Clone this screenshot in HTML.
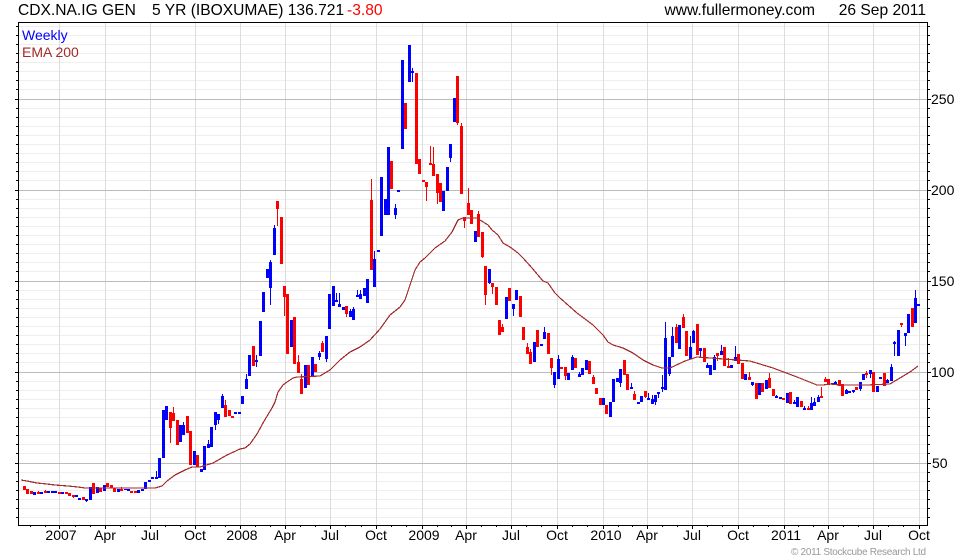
<!DOCTYPE html>
<html>
<head>
<meta charset="utf-8">
<title>CDX.NA.IG GEN 5 YR chart</title>
<style>
html,body{margin:0;padding:0;background:#fff;width:980px;height:560px;overflow:hidden}
svg{display:block}
text{font-family:"Liberation Sans",Arial,sans-serif}
</style>
</head>
<body>
<svg width="980" height="560" viewBox="0 0 980 560" xmlns="http://www.w3.org/2000/svg">
<rect width="980" height="560" fill="#fff"/>
<!-- minor horizontal grid -->
<path stroke="#eeeeee" stroke-width="1" fill="none" d="M19 26.5H927M19 35.5H927M19 44.5H927M19 53.5H927M19 62.5H927M19 71.5H927M19 80.5H927M19 89.5H927M19 108.5H927M19 117.5H927M19 126.5H927M19 135.5H927M19 144.5H927M19 153.5H927M19 162.5H927M19 171.5H927M19 180.5H927M19 199.5H927M19 208.5H927M19 217.5H927M19 226.5H927M19 235.5H927M19 244.5H927M19 253.5H927M19 262.5H927M19 271.5H927M19 290.5H927M19 299.5H927M19 308.5H927M19 317.5H927M19 326.5H927M19 335.5H927M19 344.5H927M19 353.5H927M19 362.5H927M19 381.5H927M19 390.5H927M19 399.5H927M19 408.5H927M19 417.5H927M19 426.5H927M19 435.5H927M19 444.5H927M19 453.5H927M19 472.5H927M19 481.5H927M19 490.5H927M19 499.5H927M19 508.5H927M19 517.5H927"/>
<!-- vertical grid -->
<path stroke="#dcdcdc" stroke-width="1" fill="none" d="M59.5 23V525M105.5 23V525M150.5 23V525M195.5 23V525M240.5 23V525M285.5 23V525M330.5 23V525M376.5 23V525M422.5 23V525M466.5 23V525M511.5 23V525M557.5 23V525M603.5 23V525M647.5 23V525M692.5 23V525M738.5 23V525M784.5 23V525M828.5 23V525M873.5 23V525M919.5 23V525"/>
<!-- major horizontal grid -->
<path stroke="#bcbcbc" stroke-width="1" fill="none" d="M19 99.5H927M19 190.5H927M19 281.5H927M19 372.5H927M19 463.5H927"/>
<!-- candle bodies: blue -->
<path stroke="#0000ff" stroke-width="3" fill="none" d="M34.5 492V495M41.5 492V494M48.5 491V493M52.5 491V493M55.5 491V493M62.5 492V494M76.5 495V497M79.5 498V500M86.5 499V501M90.5 487V500M97.5 487V493M104.5 485V491M118.5 489V492M125.5 489V490M128.5 489V491M138.5 490V493M142.5 489V491M145.5 482V489M149.5 480V482M152.5 477V479M156.5 477V479M159.5 458V478M163.5 410V458M166.5 406V420M180.5 425V442M183.5 425V435M194.5 451V465M201.5 469V472M204.5 446V470M208.5 444V448M211.5 427V447M215.5 412V425M218.5 414V420M222.5 396V408M235.5 412V414M239.5 412V414M242.5 396V404M246.5 379V389M249.5 355V376M256.5 360V362M260.5 321V356M263.5 292V312M267.5 269V278M270.5 262V288M274.5 228V255M291.5 320V347M305.5 365V388M312.5 357V377M319.5 353V357M326.5 336V359M329.5 294V329M333.5 286V306M336.5 300V302M339.5 304V307M343.5 307V310M350.5 311V317M353.5 309V320M357.5 295V297M360.5 294V299M364.5 288V296M367.5 279V303M374.5 259V287M378.5 250V252M381.5 177V236M385.5 199V215M388.5 147V215M395.5 208V215M398.5 190V192M402.5 60V149M409.5 45V82M412.5 71V73M443.5 191V211M447.5 167V191M450.5 144V158M454.5 98V122M475.5 231V242M489.5 269V283M506.5 297V319M513.5 304V309M516.5 290V300M534.5 342V362M541.5 344V346M544.5 332V339M554.5 372V385M558.5 359V379M568.5 373V380M572.5 357V370M579.5 374V377M582.5 368V375M586.5 360V370M603.5 398V405M610.5 402V417M613.5 379V402M617.5 378V382M620.5 369V383M631.5 387V389M638.5 402V404M641.5 396V402M648.5 398V400M652.5 399V404M655.5 395V402M658.5 392V394M662.5 387V389M665.5 338V390M669.5 357V374M672.5 336V357M679.5 325V349M690.5 347V359M693.5 331V343M700.5 348V351M707.5 365V368M710.5 365V375M714.5 357V370M721.5 351V355M731.5 365V368M735.5 357V361M745.5 374V380M752.5 382V385M759.5 383V395M766.5 380V389M776.5 396V398M780.5 397V399M787.5 393V403M794.5 402V404M797.5 397V407M804.5 408V410M811.5 403V410M814.5 402V406M818.5 397V402M832.5 383V384M835.5 382V384M846.5 390V394M849.5 391V393M853.5 390V392M860.5 382V389M863.5 374V380M870.5 370V374M877.5 386V392M880.5 377V379M887.5 380V383M891.5 367V381M894.5 342V344M898.5 330V356M905.5 333V336M908.5 314V333M915.5 298V323M918.5 304V306"/>
<!-- candle wicks: blue -->
<path stroke="#0000ff" stroke-width="1" fill="none" d="M86.5 501V502M156.5 471V477M183.5 422V425M208.5 440V444M215.5 425V430M218.5 420V424M222.5 394V396M246.5 374V379M256.5 355V367M270.5 260V305M274.5 225V228M319.5 351V360M326.5 359V362M336.5 293V300M339.5 293V304M350.5 309V311M353.5 307V309M357.5 290V295M360.5 290V294M374.5 251V259M395.5 204V219M412.5 68V82M450.5 158V162M489.5 283V284M513.5 309V316M544.5 327V332M554.5 385V388M558.5 355V359M572.5 355V357M579.5 372V374M620.5 383V387M631.5 383V387M648.5 393V398M652.5 395V399M655.5 402V405M658.5 394V398M662.5 375V392M665.5 322V338M669.5 374V376M672.5 327V336M690.5 336V347M693.5 330V331M700.5 351V357M707.5 363V365M714.5 355V357M721.5 345V351M735.5 346V357M752.5 385V386M776.5 395V396M794.5 400V402M804.5 406V408M811.5 397V403M814.5 398V402M818.5 395V397M835.5 381V382M846.5 389V390M853.5 392V393M860.5 389V391M870.5 374V378M887.5 379V380M891.5 364V367M894.5 341V356M905.5 336V346M915.5 290V298"/>
<!-- candle bodies: red -->
<path stroke="#ff0000" stroke-width="3" fill="none" d="M24.5 486V490M27.5 489V494M31.5 491V494M38.5 492V494M45.5 491V493M59.5 492V494M66.5 492V494M69.5 493V496M73.5 495V497M83.5 497V500M93.5 483V494M100.5 488V492M107.5 483V487M111.5 485V488M114.5 488V492M121.5 489V491M131.5 491V493M135.5 491V493M170.5 412V428M173.5 413V421M177.5 420V445M187.5 416V433M190.5 431V465M197.5 455V467M225.5 405V417M229.5 410V416M232.5 416V418M253.5 346V366M277.5 201V209M281.5 217V264M284.5 286V297M287.5 294V354M294.5 317V364M298.5 362V373M301.5 379V394M308.5 365V385M315.5 364V372M322.5 343V352M346.5 306V314M371.5 200V270M391.5 161V189M405.5 103V129M416.5 73V164M419.5 159V174M423.5 180V182M426.5 182V187M430.5 163V165M433.5 164V176M437.5 174V193M440.5 183V202M457.5 76V123M461.5 126V194M464.5 217V221M468.5 203V215M471.5 210V224M478.5 214V237M482.5 232V257M485.5 266V295M492.5 283V287M496.5 287V305M499.5 320V335M502.5 327V332M509.5 288V301M520.5 296V317M523.5 327V340M527.5 347V354M530.5 352V364M537.5 330V347M548.5 333V354M551.5 358V368M561.5 367V369M565.5 367V376M575.5 358V368M589.5 361V374M593.5 377V384M596.5 388V394M600.5 398V405M606.5 405V414M624.5 360V375M627.5 374V390M634.5 394V400M645.5 391V397M676.5 327V343M683.5 317V328M686.5 331V356M697.5 324V355M704.5 348V362M717.5 353V356M724.5 347V366M728.5 366V368M738.5 354V364M742.5 363V379M749.5 377V380M756.5 383V399M762.5 383V392M769.5 378V388M773.5 389V396M783.5 398V400M790.5 392V404M801.5 401V407M808.5 408V410M821.5 396V398M825.5 379V382M828.5 379V385M839.5 380V386M842.5 384V396M856.5 387V390M866.5 373V375M873.5 372V392M884.5 373V386M901.5 323V325M912.5 308V327"/>
<!-- candle wicks: red -->
<path stroke="#ff0000" stroke-width="1" fill="none" d="M38.5 491V492M45.5 490V491M73.5 497V498M121.5 487V489M170.5 428V443M173.5 407V413M225.5 400V405M277.5 209V226M284.5 297V316M298.5 355V362M301.5 374V379M322.5 341V343M346.5 314V317M371.5 179V200M426.5 187V201M430.5 146V163M433.5 147V164M437.5 193V204M457.5 123V125M461.5 123V126M464.5 221V228M468.5 188V203M478.5 211V214M482.5 257V258M485.5 295V305M492.5 287V294M502.5 324V327M527.5 343V347M530.5 349V352M551.5 368V375M565.5 376V380M593.5 375V377M634.5 391V394M645.5 397V398M676.5 324V327M683.5 314V317M717.5 356V361M728.5 358V366M749.5 372V377M769.5 373V378M808.5 406V408M821.5 387V396M825.5 377V379M866.5 371V378M901.5 325V327"/>
<!-- EMA 200 -->
<polyline fill="none" stroke="#a52a2a" stroke-width="1.2" shape-rendering="crispEdges" points="21,480 27,481 37,483 47,484 55,485 68,486 78,487 85,488 100,488 137,488 143,488 155,488 162,486 167,481 175,475 185,470 192,467 200,467 213,463 227,455 240,449 245,448 250,444 257,434 263,423 272,408 275,402 278,392 283,385 287,382 293,378 297,377 320,376 330,370 340,360 350,352 360,347 370,340 380,329 385,322 390,315 400,307 405,300 410,285 415,270 420,262 425,258 430,253 435,248 445,241 452,232 458,220 463,218 478,218 480,220 488,225 492,230 498,235 503,243 510,247 518,253 523,258 532,268 543,281 548,283 555,293 560,298 577,313 593,325 603,335 608,342 613,345 623,348 633,353 643,360 653,365 662,368 670,368 685,361 697,357 750,361 773,368 797,377 817,385 823,385 830,384 840,385 867,385 890,384 900,378 910,372 918,366"/>
<!-- frame -->
<rect x="18.5" y="22.5" width="909" height="503" fill="none" stroke="#000" stroke-width="1"/>
<!-- y ticks -->
<path stroke="#000" stroke-width="1" fill="none" d="M16 26.5H18M16 35.5H18M16 44.5H18M16 53.5H18M16 62.5H18M16 71.5H18M16 80.5H18M16 89.5H18M15 99.5H18M16 108.5H18M16 117.5H18M16 126.5H18M16 135.5H18M16 144.5H18M16 153.5H18M16 162.5H18M16 171.5H18M16 180.5H18M15 190.5H18M16 199.5H18M16 208.5H18M16 217.5H18M16 226.5H18M16 235.5H18M16 244.5H18M16 253.5H18M16 262.5H18M16 271.5H18M15 281.5H18M16 290.5H18M16 299.5H18M16 308.5H18M16 317.5H18M16 326.5H18M16 335.5H18M16 344.5H18M16 353.5H18M16 362.5H18M15 372.5H18M16 381.5H18M16 390.5H18M16 399.5H18M16 408.5H18M16 417.5H18M16 426.5H18M16 435.5H18M16 444.5H18M16 453.5H18M15 463.5H18M16 472.5H18M16 481.5H18M16 490.5H18M16 499.5H18M16 508.5H18M16 517.5H18"/>
<path stroke="#000" stroke-width="1" fill="none" d="M928 26.5H930M928 35.5H930M928 44.5H930M928 53.5H930M928 62.5H930M928 71.5H930M928 80.5H930M928 89.5H930M928 99.5H931M928 108.5H930M928 117.5H930M928 126.5H930M928 135.5H930M928 144.5H930M928 153.5H930M928 162.5H930M928 171.5H930M928 180.5H930M928 190.5H931M928 199.5H930M928 208.5H930M928 217.5H930M928 226.5H930M928 235.5H930M928 244.5H930M928 253.5H930M928 262.5H930M928 271.5H930M928 281.5H931M928 290.5H930M928 299.5H930M928 308.5H930M928 317.5H930M928 326.5H930M928 335.5H930M928 344.5H930M928 353.5H930M928 362.5H930M928 372.5H931M928 381.5H930M928 390.5H930M928 399.5H930M928 408.5H930M928 417.5H930M928 426.5H930M928 435.5H930M928 444.5H930M928 453.5H930M928 463.5H931M928 472.5H930M928 481.5H930M928 490.5H930M928 499.5H930M928 508.5H930M928 517.5H930"/>
<!-- x ticks -->
<path stroke="#000" stroke-width="1" fill="none" d="M30.5 526V527M45.5 526V527M75.5 526V527M90.5 526V527M120.5 526V527M135.5 526V527M165.5 526V527M180.5 526V527M210.5 526V527M225.5 526V527M255.5 526V527M270.5 526V527M300.5 526V527M315.5 526V527M345.5 526V527M361.5 526V527M391.5 526V527M406.5 526V527M437.5 526V527M451.5 526V527M481.5 526V527M496.5 526V527M526.5 526V527M541.5 526V527M572.5 526V527M587.5 526V527M618.5 526V527M632.5 526V527M662.5 526V527M677.5 526V527M707.5 526V527M722.5 526V527M753.5 526V527M768.5 526V527M798.5 526V527M813.5 526V527M843.5 526V527M858.5 526V527M888.5 526V527M903.5 526V527M59.5 526V529M105.5 526V529M150.5 526V529M195.5 526V529M240.5 526V529M285.5 526V529M330.5 526V529M376.5 526V529M422.5 526V529M466.5 526V529M511.5 526V529M557.5 526V529M603.5 526V529M647.5 526V529M692.5 526V529M738.5 526V529M784.5 526V529M828.5 526V529M873.5 526V529M919.5 526V529"/>
<!-- header -->
<g font-size="15.6" fill="#000">
<text x="18" y="15">CDX.NA.IG GEN</text>
<text x="152" y="15">5 YR (IBOXUMAE) 136.721</text>
<text x="347" y="15" fill="#ff0000">-3.80</text>
<text x="815" y="15" text-anchor="end">www.fullermoney.com</text>
<text x="926" y="15" text-anchor="end">26 Sep 2011</text>
</g>
<text x="22" y="40" font-size="14" fill="#0000ff">Weekly</text>
<text x="22" y="57" font-size="14" fill="#a52a2a">EMA 200</text>
<!-- y labels -->
<g font-size="14" fill="#000">
<text x="931" y="104">250</text>
<text x="931" y="195">200</text>
<text x="931" y="286">150</text>
<text x="931" y="377">100</text>
<text x="932" y="468">50</text>
</g>
<!-- x labels -->
<g font-size="14" fill="#000" text-anchor="middle">
<text x="61" y="540">2007</text>
<text x="105" y="540">Apr</text>
<text x="150" y="540">Jul</text>
<text x="195" y="540">Oct</text>
<text x="242" y="540">2008</text>
<text x="285" y="540">Apr</text>
<text x="330" y="540">Jul</text>
<text x="376" y="540">Oct</text>
<text x="424" y="540">2009</text>
<text x="466" y="540">Apr</text>
<text x="511" y="540">Jul</text>
<text x="557" y="540">Oct</text>
<text x="606" y="540">2010</text>
<text x="647" y="540">Apr</text>
<text x="692" y="540">Jul</text>
<text x="738" y="540">Oct</text>
<text x="786" y="540">2011</text>
<text x="828" y="540">Apr</text>
<text x="873" y="540">Jul</text>
<text x="919" y="540">Oct</text>
</g>
<text x="791" y="555" font-size="10" fill="#999999" textLength="135" lengthAdjust="spacing">© 2011 Stockcube Research Ltd</text>
</svg>
</body>
</html>
